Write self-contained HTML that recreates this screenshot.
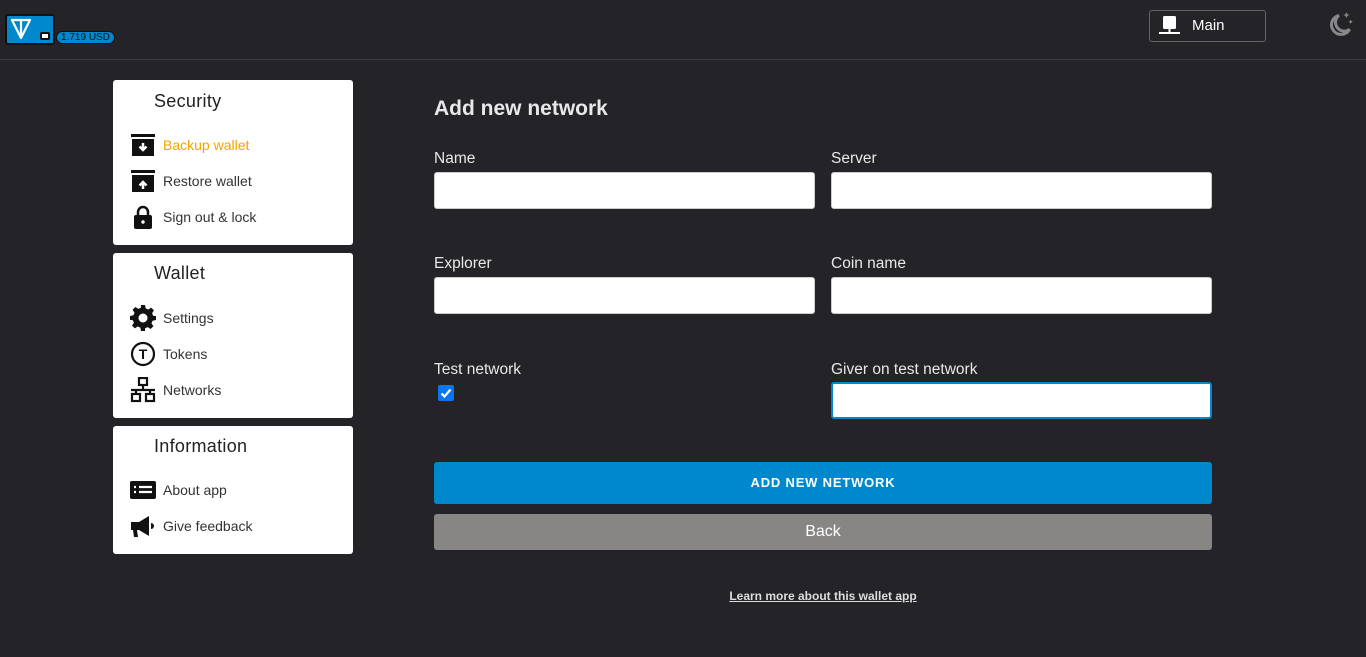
<!DOCTYPE html>
<html><head><style>
*{box-sizing:border-box;margin:0;padding:0}
body{width:1366px;height:657px;background:#232328;font-family:"Liberation Sans",sans-serif;position:relative;overflow:hidden}
.hdr{position:absolute;left:0;top:0;width:1366px;height:60px;border-bottom:1px solid #3a3a40}
.card{position:absolute;left:113px;width:240px;background:#fff;border-radius:3px}
.card h3{position:absolute;left:41px;font-size:18px;font-weight:normal;color:#222;letter-spacing:.3px}
.item{position:absolute;left:17px;height:26px;display:flex;align-items:center;font-size:14px;color:#333}
.item svg{width:26px;height:26px;margin-right:7px;flex-shrink:0}
.lbl{position:absolute;font-size:15.5px;color:#e8e8e8}
.inp{position:absolute;width:381px;height:37px;background:#fff;border:1px solid #ccc;border-radius:3px}
</style></head><body>
<div class="hdr">
<div style="position:absolute;left:5px;top:14px;width:50px;height:31px;background:#0088cc;border:2px solid #111;border-radius:3px"></div>
<svg style="position:absolute;left:9px;top:17px" width="24" height="24" viewBox="0 0 24 24"><path d="M3 3H21L12 21Z M12 3V21" fill="none" stroke="#fff" stroke-width="2.2" stroke-linejoin="round"/></svg>
<div style="position:absolute;left:40px;top:32px;width:10px;height:8px;background:#fff;border:2px solid #111;border-radius:2px"></div>
<div style="position:absolute;left:56px;top:31px;width:59px;height:13px;background:#0088cc;border:1px solid #111;border-radius:7px;font-size:10px;color:#111;text-align:center;line-height:11px">1.719 USD</div>
<div style="position:absolute;left:1149px;top:10px;width:117px;height:32px;border:1px solid #666;border-radius:3px;color:#fff;font-size:15px;line-height:30px;padding-left:42px">Main</div>
<svg style="position:absolute;left:1159px;top:15px" width="22" height="22" viewBox="0 0 22 22"><rect x="4" y="1" width="13" height="13" rx="1.5" fill="#fff"/><rect x="9.5" y="14" width="2" height="4" fill="#fff"/><rect x="0" y="17" width="21" height="2" fill="#fff"/></svg>
<svg style="position:absolute;left:1324px;top:9px" width="32" height="32" viewBox="0 0 30 30"><path d="M14 6A9 9 0 1 0 24 19A7 7 0 0 1 14 6Z" fill="none" stroke="#888" stroke-width="2.8"/><path d="M21 3l1 2 2 .5-2 1-1 2-1-2-2-1 2-.5z M25 10l.7 1.3 1.3.7-1.3.7-.7 1.3-.7-1.3-1.3-.7 1.3-.7z" fill="#888"/></svg>
</div>

<div class="card" style="top:80px;height:165px">
<h3 style="top:11px">Security</h3>
<div class="item" style="top:52px;color:#f4a300"><svg viewBox="0 0 26 26"><rect x="1" y="2" width="24" height="3" fill="#111"/><rect x="2" y="7" width="22" height="17" fill="#111"/><path d="M13 11v7M9.5 14.5L13 18l3.5-3.5" stroke="#fff" stroke-width="2.5" fill="none"/></svg>Backup wallet</div>
<div class="item" style="top:88px"><svg viewBox="0 0 26 26"><rect x="1" y="2" width="24" height="3" fill="#111"/><rect x="2" y="7" width="22" height="17" fill="#111"/><path d="M13 21v-7M9.5 17.5L13 14l3.5 3.5" stroke="#fff" stroke-width="2.5" fill="none"/></svg>Restore wallet</div>
<div class="item" style="top:124px"><svg viewBox="0 0 26 26"><path d="M8 12V8a5 5 0 0 1 10 0v4" stroke="#111" stroke-width="2.5" fill="none"/><rect x="4" y="11" width="18" height="14" rx="2" fill="#111"/><circle cx="13" cy="18" r="1.7" fill="#fff"/></svg>Sign out &amp; lock</div>
</div>

<div class="card" style="top:253px;height:165px">
<h3 style="top:10px">Wallet</h3>
<div class="item" style="top:52px"><svg viewBox="0 0 26 26"><path d="M11 0h4l.7 3.4 2.6 1.1 2.9-1.9 2.8 2.8-1.9 2.9 1.1 2.6L26 11v4l-3.4.7-1.1 2.6 1.9 2.9-2.8 2.8-2.9-1.9-2.6 1.1L15 26h-4l-.7-3.4-2.6-1.1-2.9 1.9-2.8-2.8 1.9-2.9-1.1-2.6L0 15v-4l3.4-.7 1.1-2.6-1.9-2.9 2.8-2.8 2.9 1.9 2.6-1.1z" fill="#111"/><circle cx="13" cy="13" r="4.5" fill="#fff"/></svg>Settings</div>
<div class="item" style="top:88px"><svg viewBox="0 0 26 26"><circle cx="13" cy="13" r="11" stroke="#111" stroke-width="2.2" fill="none"/><text x="13" y="18" font-size="14" font-weight="bold" text-anchor="middle" font-family="Liberation Sans" fill="#111">T</text></svg>Tokens</div>
<div class="item" style="top:124px"><svg viewBox="0 0 26 26"><rect x="9" y="1" width="8" height="7" stroke="#111" stroke-width="2.2" fill="none"/><path d="M13 8v4M1 13h24M6 13v4M20 13v4" stroke="#111" stroke-width="2.2"/><rect x="2" y="17" width="8" height="7" stroke="#111" stroke-width="2.2" fill="none"/><rect x="16" y="17" width="8" height="7" stroke="#111" stroke-width="2.2" fill="none"/></svg>Networks</div>
</div>

<div class="card" style="top:426px;height:128px">
<h3 style="top:10px">Information</h3>
<div class="item" style="top:51px"><svg viewBox="0 0 26 26"><rect x="0" y="4" width="26" height="18" rx="2" fill="#111"/><path d="M4 10h2M9 10h13M4 15h2M9 15h13" stroke="#fff" stroke-width="2.2"/></svg>About app</div>
<div class="item" style="top:87px"><svg viewBox="0 0 26 26"><path d="M1 9h8l10-6v20L9 17H7l1 7H4l-1-7H1z" fill="#111"/><path d="M21 10a3 3 0 0 1 0 6z" fill="#111"/></svg>Give feedback</div>
</div>

<div style="position:absolute;left:434px;top:97px;font-size:21px;font-weight:bold;color:#e8e8e8">Add new network</div>
<div class="lbl" style="left:434px;top:150px">Name</div>
<div class="lbl" style="left:831px;top:150px">Server</div>
<div class="inp" style="left:434px;top:172px"></div>
<div class="inp" style="left:831px;top:172px"></div>
<div class="lbl" style="left:434px;top:255px">Explorer</div>
<div class="lbl" style="left:831px;top:255px">Coin name</div>
<div class="inp" style="left:434px;top:277px"></div>
<div class="inp" style="left:831px;top:277px"></div>
<div class="lbl" style="left:434px;top:361px">Test network</div>
<div style="position:absolute;left:438px;top:385px;width:16px;height:16px;background:#0b76ef;border-radius:2px"><svg width="16" height="16" viewBox="0 0 16 16"><path d="M3.5 8.5l3 3 6-7" stroke="#fff" stroke-width="2.2" fill="none"/></svg></div>
<div class="lbl" style="left:831px;top:361px">Giver on test network</div>
<div class="inp" style="left:831px;top:382px;border:2px solid #0088cc"></div>
<div style="position:absolute;left:434px;top:462px;width:778px;height:42px;background:#0088cc;border-radius:3px;color:#fff;font-weight:bold;font-size:13px;letter-spacing:.8px;text-align:center;line-height:42px">ADD NEW NETWORK</div>
<div style="position:absolute;left:434px;top:514px;width:778px;height:36px;background:#878685;border-radius:3px;color:#fff;font-size:16px;text-align:center;line-height:36px">Back</div>
<div style="position:absolute;left:0;width:1646px;top:589px;text-align:center;font-size:12px;font-weight:bold;color:#ddd;text-decoration:underline">Learn more about this wallet app</div>
</body></html>
